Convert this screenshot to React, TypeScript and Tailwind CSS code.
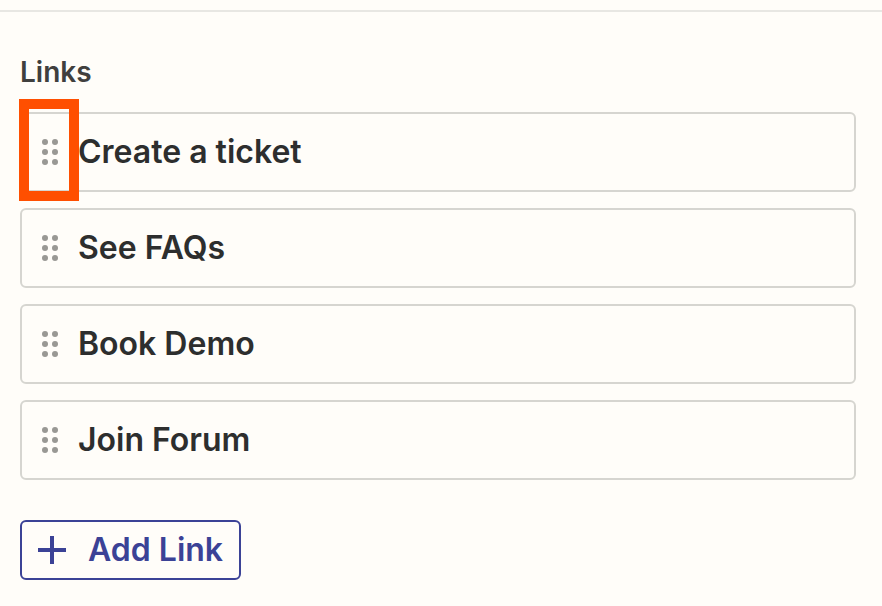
const links = ['Create a ticket', 'See FAQs', 'Book Demo', 'Join Forum'];

function DragHandle() {
  return (
    <svg width="16" height="26" viewBox="0 0 16 26" className="shrink-0" fill="#999894">
      <circle cx="3" cy="3" r="3" />
      <circle cx="13" cy="3" r="3" />
      <circle cx="3" cy="13" r="3" />
      <circle cx="13" cy="13" r="3" />
      <circle cx="3" cy="23" r="3" />
      <circle cx="13" cy="23" r="3" />
    </svg>
  );
}

export default function App() {
  return (
    <div className="relative h-[606px] w-[882px] overflow-hidden bg-[#fffdf9] font-['Inter',sans-serif]">
      <div className="h-[12px] border-b-2 border-[#e8e7e3]" />

      <div className="px-5 pt-[44px]">
        <div className="h-[32px] text-[28px] font-semibold leading-[32px] text-[#403f3e]">Links</div>

        <div className="mt-[24px] flex w-[836px] flex-col gap-4">
          {links.map(link => (
            <div
              key={link}
              className="flex h-[80px] items-center gap-[20px] rounded-[6px] border-2 border-[#d6d5d0] pl-[20px]"
            >
              <DragHandle />
              <span className="text-[32px] font-semibold text-[#2d2e2e]">{link}</span>
            </div>
          ))}
        </div>

        <button className="mt-[40px] flex h-[60px] w-[221px] items-center rounded-[6px] border-2 border-[#3b4296] pl-[16px] text-[#3b4296]">
          <svg width="28" height="28" viewBox="0 0 28 28" className="shrink-0" fill="currentColor">
            <rect x="0" y="12" width="28" height="4" />
            <rect x="12" y="0" width="4" height="28" />
          </svg>
          <span className="ml-[22px] text-[32px] font-semibold">Add Link</span>
        </button>
      </div>

      {/* highlight box drawn over the first row */}
      <div className="absolute left-[19px] top-[99px] h-[102px] w-[60px] border-[10px] border-[#ff4f00]" />
    </div>
  );
}
